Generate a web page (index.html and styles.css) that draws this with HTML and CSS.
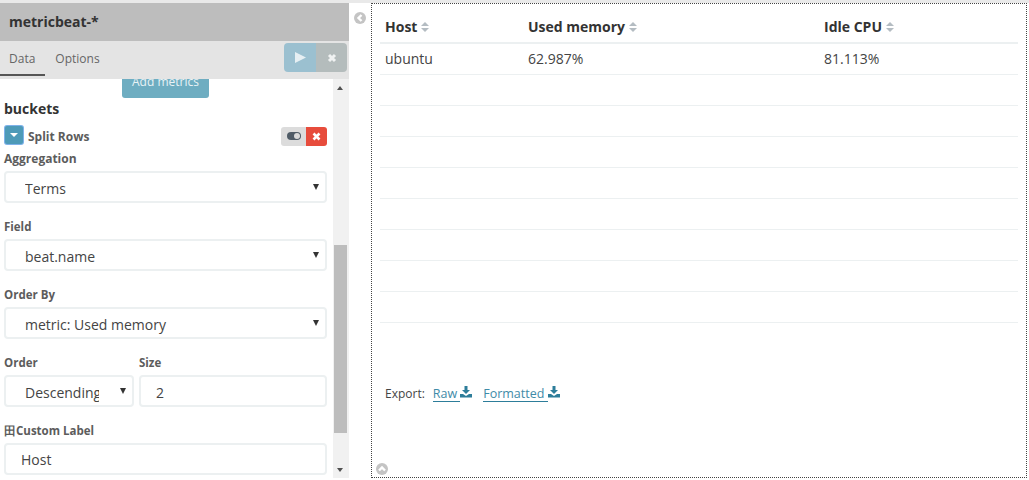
FILE: index.html
```html
<!DOCTYPE html>
<html lang="en">

<head>
    <meta charset="UTF-8">
    <title>Visualize</title>
    <link rel="stylesheet" href="styles.css">
</head>

<body>
    <div class="page">
        <aside class="sidebar">
            <div class="index-title">metricbeat-*</div>
            <div class="tabs">
                <a class="tab tab-active">Data</a>
                <a class="tab">Options</a>
                <div class="run-buttons">
                    <button class="run-btn run-apply">
                        <svg width="11" height="11" viewBox="0 0 11 11"><path d="M0 0l11 5.5L0 11z" fill="#fff" opacity=".75"/></svg>
                    </button>
                    <button class="run-btn run-discard">
                        <svg width="10" height="10" viewBox="0 0 10 10"><path d="M2 2l6 6M8 2l-6 6" stroke="#fff" stroke-width="3" opacity=".8"/></svg>
                    </button>
                </div>
            </div>
            <div class="sidebar-body">
                <div class="form-scroll">
                    <div class="add-row"><button class="add-metrics">Add metrics</button></div>
                    <div class="section-title">buckets</div>
                    <div class="agg-head">
                        <button class="toggle-btn"><span class="caret-down"></span></button>
                        <span class="agg-name">Split Rows</span>
                        <div class="agg-actions">
                            <span class="agg-switch">
                                <svg width="14" height="10" viewBox="0 0 14 10"><rect x="0" y="1" width="14" height="8" rx="4" fill="#4f5b66"/><circle cx="10" cy="5" r="3" fill="#d9d9d9"/></svg>
                            </span>
                            <span class="agg-remove">
                                <svg width="9" height="9" viewBox="0 0 9 9"><path d="M1.5 1.5l6 6M7.5 1.5l-6 6" stroke="#fff" stroke-width="2.6"/></svg>
                            </span>
                        </div>
                    </div>

                    <label class="field-label">Aggregation</label>
                    <div class="select-wrap">
                        <select class="field-control">
                            <option>Terms</option>
                        </select>
                    </div>

                    <label class="field-label">Field</label>
                    <div class="select-wrap">
                        <select class="field-control">
                            <option>beat.name</option>
                        </select>
                    </div>

                    <label class="field-label">Order By</label>
                    <div class="select-wrap">
                        <select class="field-control">
                            <option>metric: Used memory</option>
                        </select>
                    </div>

                    <div class="order-row">
                        <div class="order-col">
                            <label class="field-label">Order</label>
                            <div class="select-wrap">
                                <select class="field-control">
                                    <option>Descending</option>
                                </select>
                            </div>
                        </div>
                        <div class="size-col">
                            <label class="field-label">Size</label>
                            <input class="field-control size-input" type="text" value="2">
                        </div>
                    </div>

                    <label class="field-label">田Custom Label</label>
                    <input class="field-control label-input" type="text" value="Host">
                </div>
                <div class="scrollbar">
                    <span class="arrow-up"></span>
                    <div class="scroll-track"><div class="scroll-thumb"></div></div>
                    <span class="arrow-down"></span>
                </div>
            </div>
        </aside>

        <div class="gutter">
            <span class="circle-btn">
                <svg width="8" height="8" viewBox="0 0 8 8"><path d="M5.5 1L2.5 4l3 3" fill="none" stroke="#fff" stroke-width="2.4"/></svg>
            </span>
        </div>

        <main class="vis">
            <table class="data-table">
                <colgroup>
                    <col class="col-host">
                    <col class="col-memory">
                    <col>
                </colgroup>
                <thead>
                    <tr>
                        <th>Host <span class="sort"></span></th>
                        <th>Used memory <span class="sort"></span></th>
                        <th>Idle CPU <span class="sort"></span></th>
                    </tr>
                </thead>
                <tbody>
                    <tr><td>ubuntu</td><td>62.987%</td><td>81.113%</td></tr>
                    <tr><td></td><td></td><td></td></tr>
                    <tr><td></td><td></td><td></td></tr>
                    <tr><td></td><td></td><td></td></tr>
                    <tr><td></td><td></td><td></td></tr>
                    <tr><td></td><td></td><td></td></tr>
                    <tr><td></td><td></td><td></td></tr>
                    <tr><td></td><td></td><td></td></tr>
                    <tr><td></td><td></td><td></td></tr>
                </tbody>
            </table>
            <div class="export">
                <span class="export-label">Export:</span>
                <a class="export-link">Raw</a>
                <svg class="dl-icon" width="12" height="12" viewBox="0 0 12 12"><path d="M4.5 0h3v4h2.5L6 8 2 4h2.5z" fill="#2d7d9a"/><path d="M0 8h3l3 2 3-2h3v3.5H0z" fill="#2d7d9a"/></svg>
                <a class="export-link export-second">Formatted</a>
                <svg class="dl-icon" width="12" height="12" viewBox="0 0 12 12"><path d="M4.5 0h3v4h2.5L6 8 2 4h2.5z" fill="#2d7d9a"/><path d="M0 8h3l3 2 3-2h3v3.5H0z" fill="#2d7d9a"/></svg>
            </div>
            <span class="circle-btn spy-toggle">
                <svg width="8" height="8" viewBox="0 0 8 8"><path d="M1 5.5L4 2.5l3 3" fill="none" stroke="#fff" stroke-width="2.4"/></svg>
            </span>
        </main>
    </div>
</body>

</html>
```

FILE: styles.css
```css
html,
body {
    margin: 0;
    height: 100%;
    overflow: hidden;
}

body {
    font-family: "Open Sans", sans-serif;
    font-size: 14px;
    color: #444;
    background-color: #fff;
}

.page {
    display: flex;
    height: 480px;
    box-sizing: border-box;
    border-top: 3px solid #e9e9e9;
    background-color: #fff;
}

/* left panel */
.sidebar {
    width: 349px;
    height: 475px;
    display: flex;
    flex-direction: column;
    flex-shrink: 0;
}

.index-title {
    height: 38px;
    line-height: 38px;
    padding-left: 9px;
    background-color: #bdbdbd;
    color: #333;
    font-size: 14px;
    font-weight: 700;
}

.tabs {
    height: 38px;
    display: flex;
    background-color: #e4e4e4;
    font-size: 12px;
    color: #666;
}

.tab {
    padding: 0 10px 0 9px;
    line-height: 36px;
    height: 33px;
    margin-right: 1px;
}

.tab-active {
    border-bottom: 2px solid #555;
}

.run-buttons {
    margin: 2px 2px 0 auto;
    display: flex;
    height: 29px;
    border-radius: 4px;
    overflow: hidden;
}

.run-btn {
    border: 0;
    padding: 0;
    display: flex;
    align-items: center;
    justify-content: center;
}

.run-apply {
    width: 32px;
    background-color: #9bc0d0;
}

.run-discard {
    width: 31px;
    background-color: #b4bcbc;
}

.sidebar-body {
    flex: 1;
    display: flex;
    min-height: 0;
    background-color: #fff;
}

.form-scroll {
    width: 323px;
    padding: 0 6px 0 4px;
    flex-shrink: 0;
    overflow: hidden;
}

.add-row {
    display: flex;
    justify-content: center;
    height: 19px;
    overflow: hidden;
}

.add-metrics {
    margin-top: -14px;
    height: 33px;
    width: 87px;
    padding: 0;
    border: 0;
    border-radius: 0 0 3px 3px;
    background-color: #6eadc1;
    color: #e8f2f5;
    font-family: inherit;
    font-size: 12px;
}

.section-title {
    margin-top: 1px;
    font-size: 14px;
    font-weight: 700;
    color: #333;
    line-height: 20px;
}

.agg-head {
    display: flex;
    align-items: center;
    height: 20px;
    margin-top: 7px;
}

.toggle-btn {
    width: 18px;
    height: 18px;
    margin: 0 0 2px 1px;
    padding: 0;
    border: 0;
    box-shadow: 0 0 0 1px #7fb2ea;
    border-radius: 2px;
    background-color: #4d9ab8;
    display: flex;
    align-items: center;
    justify-content: center;
}

.caret-down {
    width: 0;
    height: 0;
    border-left: 4px solid transparent;
    border-right: 4px solid transparent;
    border-top: 4px solid #fff;
}

.agg-name {
    margin-left: 5px;
    font-size: 12px;
    font-weight: 700;
    color: #5c5c5c;
}

.agg-actions {
    margin-left: auto;
    display: flex;
    height: 19px;
    border-radius: 3px;
    overflow: hidden;
}

.agg-switch {
    width: 25px;
    background-color: #dcdcdc;
    display: flex;
    align-items: center;
    justify-content: center;
}

.agg-remove {
    width: 21px;
    background-color: #e74c3c;
    display: flex;
    align-items: center;
    justify-content: center;
}

.field-label {
    display: block;
    height: 20px;
    margin-top: 16px;
    line-height: 16px;
    font-size: 11.5px;
    font-weight: 700;
    color: #5c5c5c;
}

.agg-head + .field-label {
    margin-top: 3px;
    height: 22px;
    line-height: 20px;
    font-size: 12px;
}

.select-wrap {
    position: relative;
}

.select-wrap::after {
    content: "";
    position: absolute;
    right: 8px;
    top: 13px;
    border-left: 3px solid transparent;
    border-right: 3px solid transparent;
    border-top: 6px solid #333;
}

.field-control {
    display: block;
    width: 100%;
    height: 32px;
    box-sizing: border-box;
    margin: 0;
    border: 2px solid #ecf0f1;
    border-radius: 4px;
    background-color: #fff;
    font-family: inherit;
    font-size: 14px;
    color: #444;
    outline: none;
}

select.field-control {
    appearance: none;
    padding: 2px 20px 0 19px;
}

.order-row {
    display: flex;
    gap: 5px;
}

.order-col {
    width: 130px;
}

.order-col select.field-control {
    padding-right: 33px;
}

.size-col {
    flex: 1;
}

.size-input {
    padding: 2px 15px 0;
}

.label-input {
    padding: 1px 15px 0;
}

.scrollbar {
    width: 16px;
    height: 100%;
    background-color: #f1f1f1;
    display: flex;
    flex-direction: column;
    align-items: center;
}

.arrow-up,
.arrow-down {
    flex-shrink: 0;
    width: 0;
    height: 0;
    border-left: 3.5px solid transparent;
    border-right: 3.5px solid transparent;
}

.arrow-up {
    margin: 7px 2px 6px 0;
    border-bottom: 4px solid #505050;
}

.arrow-down {
    margin: 6px 2px 6px 0;
    border-top: 4px solid #505050;
}

.scroll-track {
    flex: 1;
    width: 100%;
    display: flex;
    flex-direction: column;
    justify-content: flex-end;
}

.scroll-thumb {
    width: 13px;
    height: 188px;
    margin-left: 1px;
    margin-bottom: 29px;
    background-color: #bdbdbd;
}

/* gap between panel and chart */
.gutter {
    width: 22px;
    flex-shrink: 0;
    display: flex;
    justify-content: center;
    align-items: flex-start;
    padding-top: 9px;
    box-sizing: border-box;
}

.circle-btn {
    width: 12px;
    height: 12px;
    border-radius: 50%;
    background-color: #c4c4c4;
    display: flex;
    align-items: center;
    justify-content: center;
}

/* chart area */
.vis {
    position: relative;
    width: 656px;
    height: 475px;
    box-sizing: border-box;
    padding: 7px 8px 0 8px;
    border: 1px dotted #444;
}

.data-table {
    width: 638px;
    border-collapse: collapse;
    table-layout: fixed;
}

.col-host {
    width: 143px;
}

.col-memory {
    width: 296px;
}

.data-table th {
    height: 31px;
    padding: 0 5px;
    text-align: left;
    font-weight: 700;
    font-size: 14px;
    color: #333;
    border-bottom: 2px solid #ecf0f1;
}

.data-table td {
    height: 28px;
    padding: 0 5px 2px;
    color: #444;
    border-bottom: 1px solid #ecf0f1;
}

.sort {
    display: inline-block;
    vertical-align: 0;
    position: relative;
    width: 9px;
    height: 10px;
}

.sort::before,
.sort::after {
    content: "";
    position: absolute;
    left: 0;
    border-left: 4.5px solid transparent;
    border-right: 4.5px solid transparent;
}

.sort::before {
    top: 0;
    border-bottom: 4.5px solid #b4bcc2;
}

.sort::after {
    bottom: 0;
    border-top: 4.5px solid #b4bcc2;
}

.export {
    display: flex;
    align-items: center;
    margin: 62px 0 0 5px;
    font-size: 12px;
    line-height: 17px;
    color: #444;
}

.export-link {
    margin-left: 8px;
    padding-right: 3px;
    font-size: 12.5px;
    line-height: 15px;
    color: #3f8ba8;
    border-bottom: 1px solid #2d7d9a;
}

.export-second {
    margin-left: 11px;
    padding-right: 4px;
}

.dl-icon {
    margin-top: -3px;
}

.spy-toggle {
    position: absolute;
    left: 4px;
    bottom: 2px;
}
```
